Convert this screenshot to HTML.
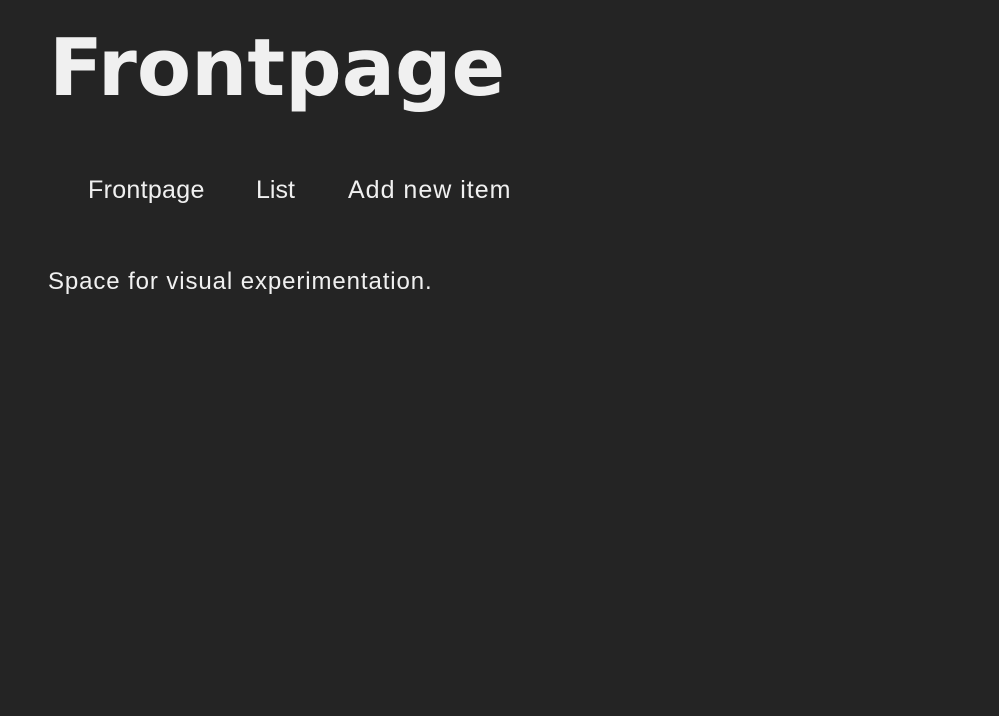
<!DOCTYPE html>
<html><head><meta charset="utf-8"><style>
html,body{margin:0;padding:0;background:#242424;width:999px;height:716px;overflow:hidden}
.a{position:absolute;white-space:nowrap;color:#f0f0f0;line-height:1}
h1{position:absolute;margin:0;left:49px;top:29px;font:bold 79px "DejaVu Sans",sans-serif;color:#f0f0f0;line-height:1}
.n{font:25px "Liberation Sans",sans-serif;top:176px}
.p{font:24px "Liberation Sans",sans-serif;top:268px;left:48px;letter-spacing:0.9px}
</style></head><body>
<h1>Frontpage</h1>
<div class="a n" style="left:88px;letter-spacing:0.3px">Frontpage</div>
<div class="a n" style="left:256px">List</div>
<div class="a n" style="left:348px;letter-spacing:1px">Add new item</div>
<div class="a p">Space for visual experimentation.</div>
</body></html>
